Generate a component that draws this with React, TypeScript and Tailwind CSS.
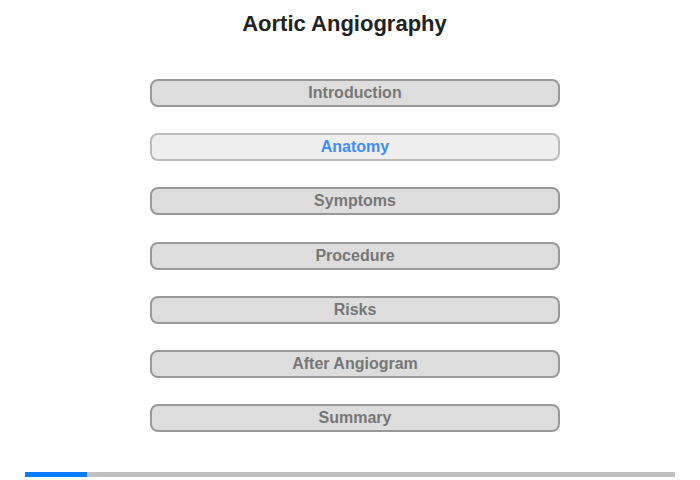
export default function App() {
  const items = ["Introduction", "Anatomy", "Symptoms", "Procedure", "Risks", "After Angiogram", "Summary"];
  return (
    <div className="w-[700px] h-[480px] bg-white relative" style={{ fontFamily: '"Liberation Sans", Arial, sans-serif' }}>
      <div className="pt-[11px] flex justify-center pr-[11px]">
        <h1 className="text-[22px] leading-[26px] font-bold text-[#222]">Aortic Angiography</h1>
      </div>
      <div className="mt-[42px] flex flex-col gap-[26.2px] ml-[150px] w-[410px]">
        {items.map((t, i) => (
          <div
            key={t}
            className={
              i === 1
                ? "h-[28px] rounded-[8px] border-2 border-[#bbbbbb] bg-[#eeeeee] flex items-center justify-center text-[16px] font-bold text-[#3d8bff]"
                : "h-[28px] rounded-[8px] border-2 border-[#999999] bg-[#dddddd] flex items-center justify-center text-[16px] font-bold text-[#777777]"
            }
          >
            {t}
          </div>
        ))}
      </div>
      <div className="absolute left-[25px] top-[472px] w-[650px] h-[5px] bg-[#c0c0c0] flex">
        <div className="w-[62px] h-full bg-[#0a7cff]" />
      </div>
    </div>
  );
}
